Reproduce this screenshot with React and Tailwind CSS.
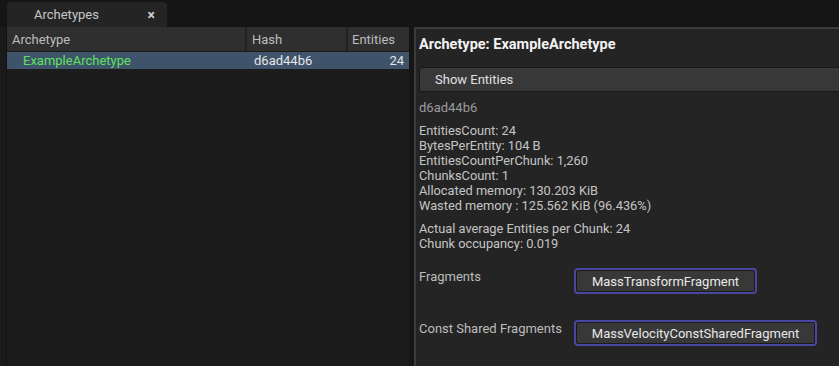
export default function App() {
  const font = { fontFamily: 'Roboto, "Noto Sans", sans-serif' };
  return (
    <div className="w-[839px] h-[366px] bg-[#151515] flex flex-col overflow-hidden text-[13px] leading-[15px]" style={font}>
      {/* tab bar */}
      <div className="h-[27px] flex items-end pl-[7px] shrink-0">
        <div className="w-[160px] h-[25px] bg-[#242424] rounded-t-[4px] flex items-center">
          <span className="ml-[27px] text-[#c8c8c8] text-[13px]">Archetypes</span>
          <span className="ml-auto mr-[12px] text-[#cfcfcf] text-[14px] font-bold leading-none">×</span>
        </div>
      </div>
      {/* body */}
      <div className="flex flex-1 min-h-0">
        <div className="w-[7px] bg-[#1a1a1a] border-r border-[#121212]"></div>
        {/* left panel */}
        <div className="w-[402px] bg-[#1c1c1c] flex flex-col">
          <div className="h-[25px] bg-[#2f2f2f] flex text-[#bdbdbd] text-[13px] border-b border-[#1c1c1c]">
            <div className="w-[240px] flex items-center pl-[5px] border-r-2 border-[#222]">Archetype</div>
            <div className="w-[101px] flex items-center pl-[5px] border-r-2 border-[#222]">Hash</div>
            <div className="flex-1 flex items-center pl-[4px]">Entities</div>
          </div>
          <div className="h-[17px] bg-[#3f536b] flex items-center text-[13px]">
            <div className="w-[240px] pl-[16px] text-[#5ee35e]">ExampleArchetype</div>
            <div className="w-[101px] pl-[7px] text-[#e6e6e6]">d6ad44b6</div>
            <div className="flex-1 text-right pr-[5px] text-[#e6e6e6]">24</div>
          </div>
        </div>
        <div className="w-[5px] bg-[#151515]"></div>
        {/* right panel */}
        <div className="flex-1 bg-[#242424] border-l-2 border-t-2 border-[#3b3b3b] pl-[3px] flex flex-col">
          <div className="mt-[8px] h-[16px] leading-[16px] text-[14.5px] font-bold text-[#f2f2f2]">Archetype: ExampleArchetype</div>
          <div className="mt-[14px] h-[25px] bg-[#383838] border border-[#181818] rounded-[3px] -mr-[4px] flex items-center pl-[15px] text-[#e0e0e0] text-[13px]">Show Entities</div>
          <div className="mt-[8px] text-[#9c9c9c]">d6ad44b6</div>
          <div className="mt-[8px] text-[#c4c4c4] text-[12.8px] flex flex-col">
            <div>EntitiesCount: 24</div>
            <div>BytesPerEntity: 104 B</div>
            <div>EntitiesCountPerChunk: 1,260</div>
            <div>ChunksCount: 1</div>
            <div>Allocated memory: 130.203 KiB</div>
            <div>Wasted memory : 125.562 KiB (96.436%)</div>
          </div>
          <div className="mt-[8px] text-[#c4c4c4] text-[12.8px] flex flex-col">
            <div>Actual average Entities per Chunk: 24</div>
            <div>Chunk occupancy: 0.019</div>
          </div>
          <div className="mt-[17px] flex items-start">
            <div className="w-[155px] pt-[1px] text-[#bdbdbd]">Fragments</div>
            <div className="w-[183px] h-[26px] rounded-[4px] border-2 border-[#4a47a3] p-0">
              <div className="w-full h-full rounded-[2px] border border-[#1a1a1a] bg-[#383838] flex items-center justify-center text-[#e8e8e8]">MassTransformFragment</div>
            </div>
          </div>
          <div className="mt-[26px] flex items-start">
            <div className="w-[155px] pt-[1px] text-[#bdbdbd]">Const Shared Fragments</div>
            <div className="w-[243px] h-[26px] rounded-[4px] border-2 border-[#4a47a3]">
              <div className="w-full h-full rounded-[2px] border border-[#1a1a1a] bg-[#383838] flex items-center justify-center text-[#e8e8e8]">MassVelocityConstSharedFragment</div>
            </div>
          </div>
        </div>
      </div>
    </div>
  );
}
